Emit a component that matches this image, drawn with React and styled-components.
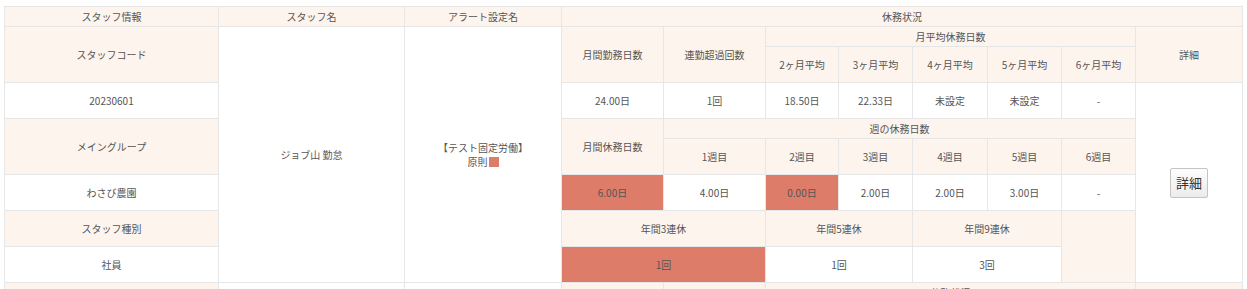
import React from 'react'
import styled, { createGlobalStyle } from 'styled-components'

const GlobalStyle = createGlobalStyle`
  body {
    margin: 0;
    background: #fff;
    font-family: 'Noto Sans CJK JP', 'Noto Sans', sans-serif;
  }
`

const Wrap = styled.div`
  padding: 6px 4px 0 4px;
`

const Table = styled.table`
  border-collapse: collapse;
  table-layout: fixed;
  width: 1238px;
  font-size: 10px;
  color: #555;
  text-align: center;

  td {
    border: 1px solid #e6e6e6;
    padding: 0;
    vertical-align: middle;
    line-height: 14px;
    white-space: nowrap;
    overflow: hidden;
  }
`

const Row = styled.tr`
  height: ${(p) => (p.$short ? 20 : 36)}px;
`

const Head = styled.td`
  background: #fdf4ee;
`

const Cell = styled.td`
  background: ${(p) => (p.$alert ? '#de7c6a' : '#fff')};
`

const Swatch = styled.span`
  display: inline-block;
  width: 10px;
  height: 10px;
  margin-left: 1px;
  background: #de7c6a;
  vertical-align: -1px;
`

const DetailButton = styled.button`
  font-family: 'Noto Sans CJK JP', sans-serif;
  font-size: 13px;
  color: #333;
  padding: 4px 4px;
  height: 30px;
  width: 38px;
  border: 1px solid #c4c4c4;
  border-radius: 2px;
  background: linear-gradient(#fdfdfd, #ececec);
`

const widths = [214, 186, 157, 102, 102, 73, 74, 75, 74, 74, 107]

const App = () => (
  <Wrap>
    <GlobalStyle />
    <Table>
      <colgroup>
        {widths.map((w, i) => (
          <col key={i} style={{ width: w }} />
        ))}
      </colgroup>
      <tbody>
        <Row $short>
          <Head>スタッフ情報</Head>
          <Head>スタッフ名</Head>
          <Head>アラート設定名</Head>
          <Head colSpan={8}>休務状況</Head>
        </Row>
        <Row $short>
          <Head rowSpan={2}>スタッフコード</Head>
          <Cell rowSpan={8}>ジョブ山 勤怠</Cell>
          <Cell rowSpan={8}>
            【テスト固定労働】
            <br />
            原則<Swatch />
          </Cell>
          <Head rowSpan={2}>月間勤務日数</Head>
          <Head rowSpan={2}>連勤超過回数</Head>
          <Head colSpan={5}>月平均休務日数</Head>
          <Head rowSpan={2}>詳細</Head>
        </Row>
        <Row>
          <Head>2ヶ月平均</Head>
          <Head>3ヶ月平均</Head>
          <Head>4ヶ月平均</Head>
          <Head>5ヶ月平均</Head>
          <Head>6ヶ月平均</Head>
        </Row>
        <Row>
          <Cell>20230601</Cell>
          <Cell>24.00日</Cell>
          <Cell>1回</Cell>
          <Cell>18.50日</Cell>
          <Cell>22.33日</Cell>
          <Cell>未設定</Cell>
          <Cell>未設定</Cell>
          <Cell>-</Cell>
          <Cell rowSpan={6}>
            <DetailButton>詳細</DetailButton>
          </Cell>
        </Row>
        <Row $short>
          <Head rowSpan={2}>メイングループ</Head>
          <Head rowSpan={2}>月間休務日数</Head>
          <Head colSpan={6}>週の休務日数</Head>
        </Row>
        <Row>
          <Head>1週目</Head>
          <Head>2週目</Head>
          <Head>3週目</Head>
          <Head>4週目</Head>
          <Head>5週目</Head>
          <Head>6週目</Head>
        </Row>
        <Row>
          <Cell>わさび農園</Cell>
          <Cell $alert>6.00日</Cell>
          <Cell>4.00日</Cell>
          <Cell $alert>0.00日</Cell>
          <Cell>2.00日</Cell>
          <Cell>2.00日</Cell>
          <Cell>3.00日</Cell>
          <Cell>-</Cell>
        </Row>
        <Row>
          <Head>スタッフ種別</Head>
          <Head colSpan={2}>年間3連休</Head>
          <Head colSpan={2}>年間5連休</Head>
          <Head colSpan={2}>年間9連休</Head>
          <Head rowSpan={2}></Head>
        </Row>
        <Row>
          <Cell>社員</Cell>
          <Cell colSpan={2} $alert>1回</Cell>
          <Cell colSpan={2}>1回</Cell>
          <Cell colSpan={2}>3回</Cell>
        </Row>
        <Row $short>
          <Head></Head>
          <Cell></Cell>
          <Cell></Cell>
          <Head></Head>
          <Head></Head>
          <Head colSpan={5}>休務状況</Head>
          <Head></Head>
        </Row>
      </tbody>
    </Table>
  </Wrap>
)

export default App
